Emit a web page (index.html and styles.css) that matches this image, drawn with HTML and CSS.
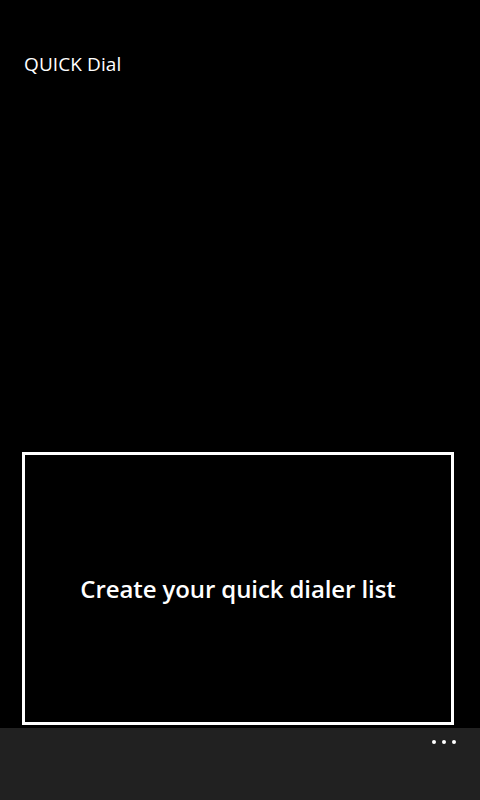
FILE: index.html
```html
<!DOCTYPE html>
<html lang="en">
<head>
<meta charset="utf-8">
<title>QUICK Dial</title>
<link rel="stylesheet" href="styles.css">
</head>
<body>
<div class="page">
  <header class="title">QUICK Dial</header>
  <main class="content">
    <div class="empty-box">
      <span class="empty-text">Create your quick dialer list</span>
    </div>
  </main>
  <footer class="appbar">
    <div class="more"><span class="dot"></span><span class="dot"></span><span class="dot"></span></div>
  </footer>
</div>
</body>
</html>
```
FILE: styles.css
```css
html, body {
  margin: 0;
  padding: 0;
  background: #000;
}
.page {
  width: 480px;
  height: 800px;
  display: flex;
  flex-direction: column;
  background: #000;
  color: #fff;
  font-family: "Open Sans", "Noto Sans", "DejaVu Sans", sans-serif;
}
.title {
  padding: 52px 0 0 24px;
  font-size: 19px;
  line-height: 24px;
  height: 24px;
  letter-spacing: 0.1px;
}
.content {
  flex: 1;
  display: flex;
  flex-direction: column;
  justify-content: flex-end;
  padding: 0 26px 3px 22px;
}
.empty-box {
  height: 267px;
  border: 3px solid #fff;
  display: flex;
  align-items: center;
  justify-content: center;
}
.empty-text {
  font-size: 24px;
  font-weight: 600;
  letter-spacing: -0.1px;
  margin-top: 0;
}
.appbar {
  height: 72px;
  background: #212121;
  display: flex;
  justify-content: flex-end;
  align-items: flex-start;
}
.more {
  display: flex;
  gap: 6px;
  padding: 12px 24px 0 0;
}
.dot {
  width: 4px;
  height: 4px;
  border-radius: 50%;
  background: #fff;
}
```
